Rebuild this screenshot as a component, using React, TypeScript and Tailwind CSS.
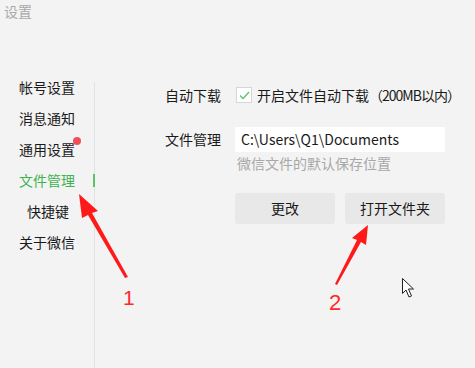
import React from "react";

const menu = [
  { label: "帐号设置" },
  { label: "消息通知" },
  { label: "通用设置", dot: true },
  { label: "文件管理", active: true },
  { label: "快捷键", indent: true },
  { label: "关于微信" },
];

const font = { fontFamily: '"Noto Sans CJK SC", "Noto Sans", sans-serif' };

function Annotations() {
  return (
    <svg className="absolute inset-0 pointer-events-none" width="475" height="368" viewBox="0 0 475 368">
      {/* arrow 1 */}
      <polygon points="79,194 98,211 92,213 128,277 125,278 88,215 82,218" fill="#ff1a1a" />
      {/* arrow 2 */}
      <polygon points="368,225 366,245 361,242 337,285 335,284 357,240 352,238" fill="#ff1a1a" />
      {/* cursor */}
      <path d="M402.5,278.5 L402.5,293.5 L406,290 L409,297 L411.5,296 L408.5,289 L413.5,289 Z" fill="#fff" stroke="#222" strokeWidth="1" />
    </svg>
  );
}

export default function App() {
  return (
    <div className="relative w-[475px] h-[368px] overflow-hidden bg-[#f3f3f3] text-[#1a1a1a]" style={font}>
      <div className="h-[70px] pl-[4px] pt-[1px] text-[14px] text-[#a9a9a9]">设置</div>
      <div className="flex h-[298px]">
        {/* sidebar */}
        <div className="w-[94px] flex flex-col pt-[2px]">
          {menu.map((m) => (
            <div
              key={m.label}
              className={`relative h-[31px] flex items-center text-[14px] ${m.indent ? "pl-[27px]" : "pl-[19px]"} ${
                m.active ? "text-[#3fb34f]" : ""
              }`}
            >
              <span className="relative">
                {m.label}
                {m.dot && <span className="absolute -right-[6px] -top-[2px] w-[8px] h-[8px] rounded-full bg-[#f0505a]" />}
              </span>
              {m.active && <span className="absolute -right-[1px] top-[9px] w-[2px] h-[13px] bg-[#5cc36a]" />}
            </div>
          ))}
        </div>
        <div className="w-px mt-[12px] bg-[#e2e2e2]" />
        {/* content */}
        <div className="flex-1 pl-[70px] pt-[16px] text-[14px]">
          <div className="flex items-center h-[18px]">
            <span className="w-[71px]">自动下载</span>
            <span className="w-[16px] h-[16px] border border-[#d6d6d6] bg-white flex items-center justify-center">
              <svg width="11" height="9" viewBox="0 0 11 9">
                <path d="M1 4.5 L4 7.5 L10 1" fill="none" stroke="#5cc36a" strokeWidth="1.3" />
              </svg>
            </span>
            <span className="ml-[5px]">
              开启文件自动下载<span className="tracking-[-1px]">（200MB以内）</span>
            </span>
          </div>
          <div className="flex items-center mt-[23px]">
            <span className="w-[70px]">文件管理</span>
            <div className="w-[210px] h-[25px] bg-white flex items-center pl-[6px]">C:\Users\Q1\Documents</div>
          </div>
          <div className="ml-[72px] mt-[1px] leading-[20px] text-[#a8a8a8]">微信文件的默认保存位置</div>
          <div className="flex gap-[10px] ml-[70px] mt-[20px]">
            <button className="w-[100px] h-[31px] rounded-[3px] bg-[#e8e8e8]">更改</button>
            <button className="w-[100px] h-[31px] rounded-[3px] bg-[#e8e8e8]">打开文件夹</button>
          </div>
        </div>
      </div>
      <span className="absolute left-[123px] top-[287px] text-[21px] leading-none text-[#ff2a2a]" style={{ fontFamily: '"Liberation Sans", sans-serif' }}>1</span>
      <span className="absolute left-[329px] top-[292px] text-[22px] leading-none text-[#ff2a2a]" style={{ fontFamily: '"Liberation Sans", sans-serif' }}>2</span>
      <Annotations />
    </div>
  );
}
